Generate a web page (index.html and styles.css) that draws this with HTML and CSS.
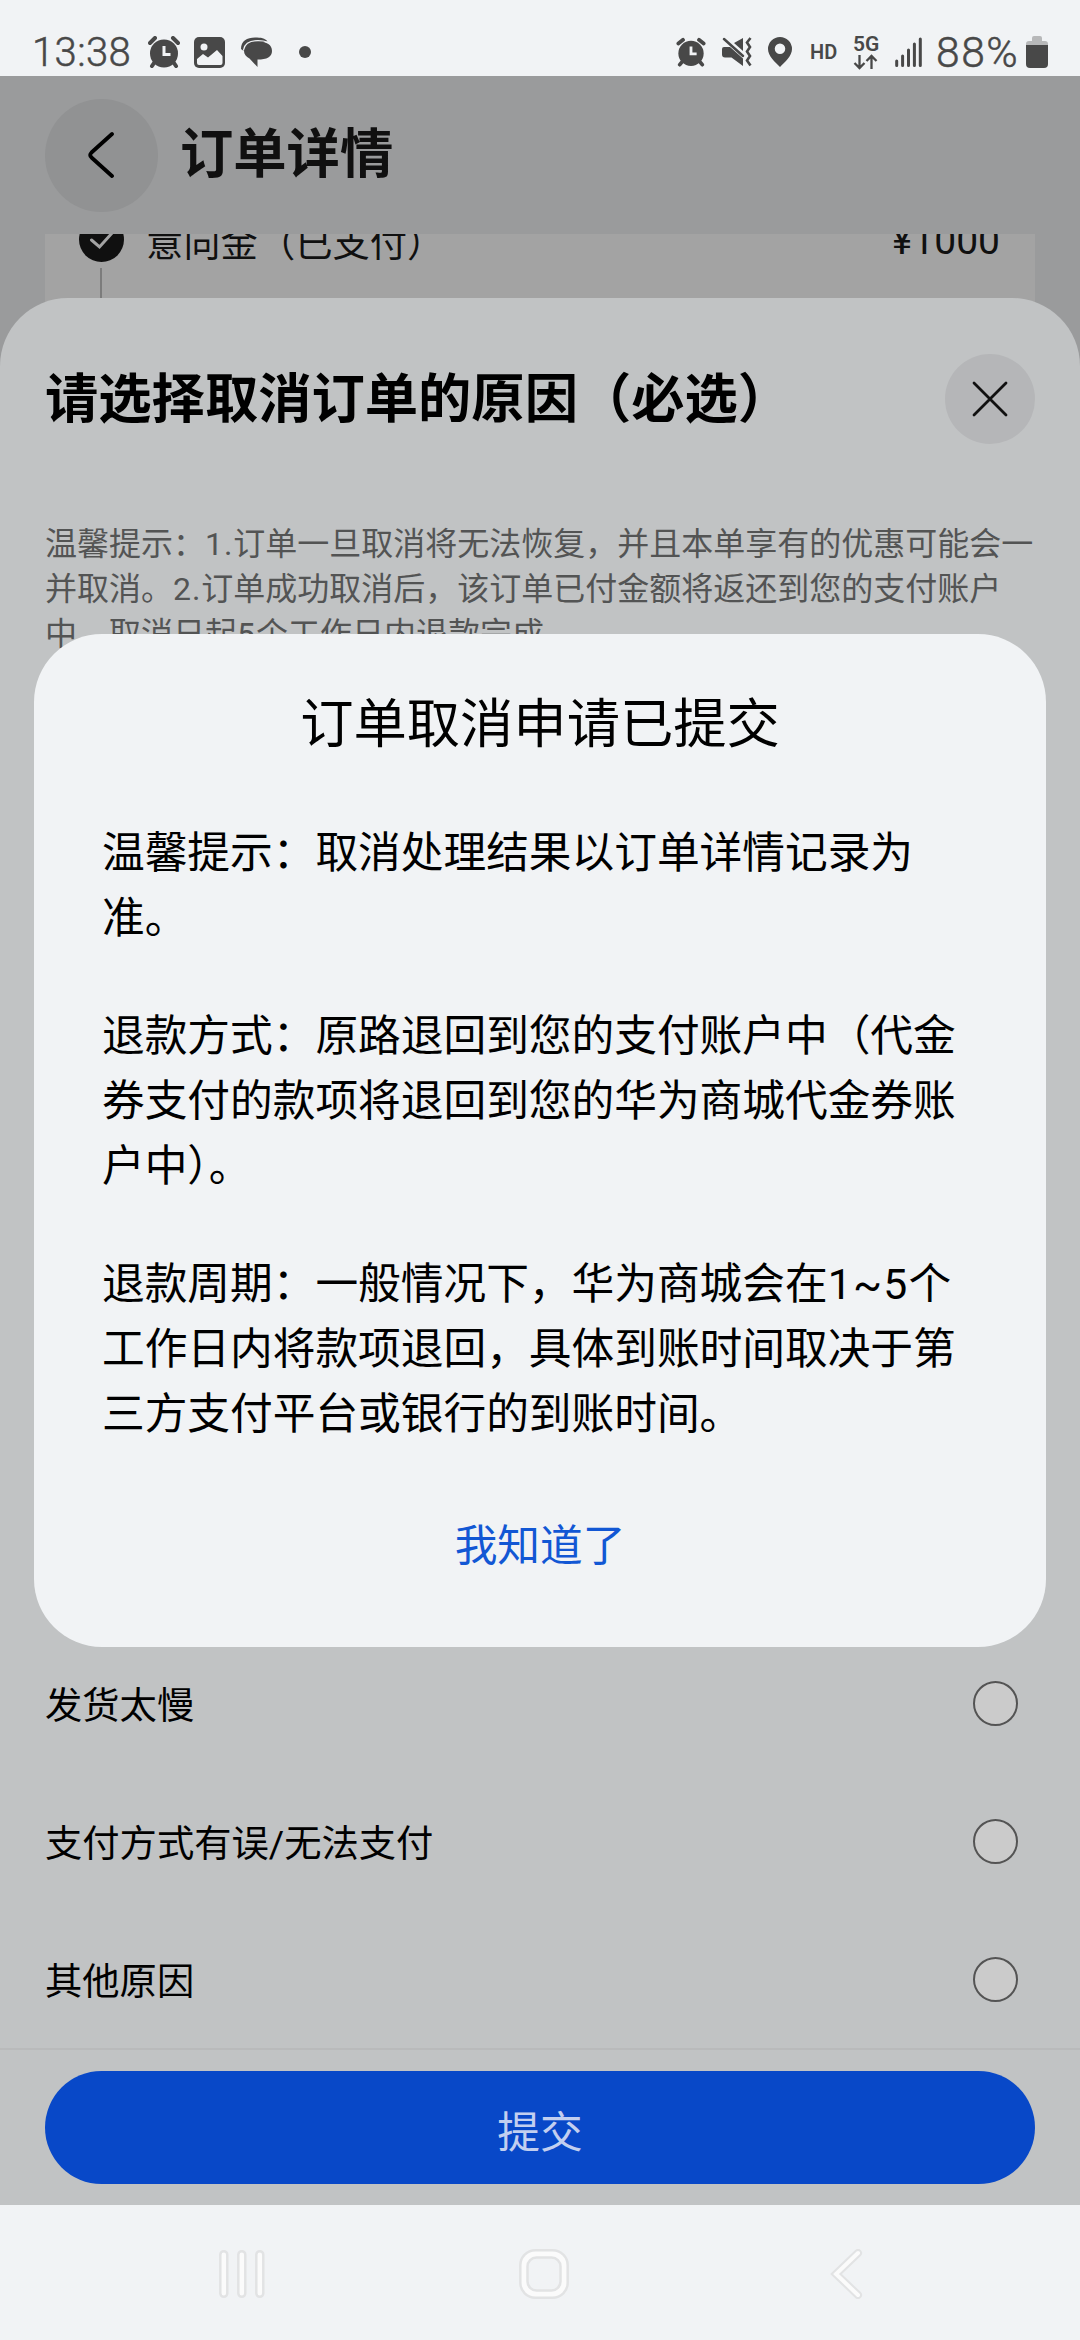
FILE: index.html
```html
<!DOCTYPE html>
<html lang="zh-CN">
  <head>
    <meta charset="utf-8">
    <title>订单详情</title>
    <link rel="stylesheet" href="styles.css">
  </head>
  <body>
    <div class="statusbar">
      <div class="status-left">
        <span class="clock">13:38</span>
        <svg class="s-alarm" width="32" height="32" viewBox="0 0 32 32">
          <circle cx="16" cy="17.5" r="14" fill="#484848"/>
          <path d="M2 7l5-5M30 7l-5-5M6 27l-2 3M26 27l2 3" stroke="#484848" stroke-width="4" stroke-linecap="round"/>
          <path d="M16 10v8.500h6.500" stroke="#f1f3f5" stroke-width="3" fill="none"/>
        </svg>
        <svg class="s-photo" width="31" height="31" viewBox="0 0 31 31">
          <rect width="31" height="31" rx="5" fill="#484848"/>
          <circle cx="10" cy="10" r="3.500" fill="#f1f3f5"/>
          <path d="M3 22l6-5 5 3.500 9-7.500 5.500 6v7q0 2-2 2h-21.500q-2 0-2-2z" fill="#f1f3f5"/>
        </svg>
        <svg class="s-chat" width="32" height="32" viewBox="0 0 32 32">
          <path d="M0 13C0 5 6 1.500 14 1.500c6 0 10 .5 12.500 4L14 9 2 14.500z" fill="#484848"/>
          <path d="M3 15C3 9 8 5.500 17 5.500S31 9 31 15s-5 8.500-14.500 8.500V31l-8-8.500C5 20.500 3 18 3 15z" fill="#484848"/>
          <path d="M2.500 14C3.500 8 9 4.600 17 4.600c4 0 7 .5 9.500 1.500" fill="none" stroke="#f1f3f5" stroke-width="1.200"/>
        </svg>
        <i class="dot"></i>
      </div>
      <div class="status-right">
        <svg width="30" height="30" viewBox="0 0 32 32">
          <circle cx="16" cy="17.500" r="13.500" fill="#484848"/>
          <path d="M2.500 7l5-4M29.500 7l-5-4M6 27l-2 2.500M26 27l2 2.500" stroke="#484848" stroke-width="4" stroke-linecap="round"/>
          <path d="M16 10v8h6" stroke="#f1f3f5" stroke-width="3" fill="none"/>
        </svg>
        <svg class="s-mute" width="30" height="30" viewBox="0 0 30 30">
          <path d="M0 12q0-2 2-2h6L21 21.500V29L9.500 20.500H3q-3 0-3-3zM12 6l9-5v13z" fill="#484848"/>
          <path d="M2 2l19 17" stroke="#484848" stroke-width="2.500" stroke-linecap="round"/>
          <path d="M28.500 1l-3.500 4.500 3 4.500-3 4.500 3 4.500-3 4.500 3.500 5" stroke="#484848" stroke-width="2.600" fill="none"/>
        </svg>
        <svg class="s-pin" width="24" height="30" viewBox="0 0 24 30">
          <path fill-rule="evenodd" d="M12 0a12 12 0 0 1 12 12c0 7-7 13-12 18C7 25 0 19 0 12A12 12 0 0 1 12 0zm0 6.500a5 5 0 1 0 0 10.500 5 5 0 0 0 0-10.500z" fill="#484848"/>
        </svg>
        <span class="hd">HD</span>
        <div class="net">
          <span>5G</span>
          <svg width="26" height="16" viewBox="0 0 26 16">
            <path d="M6.500 1v13M1.500 9l5 5 5-5M18.500 15V2M13.500 7l5-5 5 5" stroke="#484848" stroke-width="2.300" fill="none"/>
          </svg>
        </div>
        <svg class="s-signal" width="27" height="30" viewBox="0 0 27 30">
          <path d="M1.700 24v4.500M7.600 19v9.500M13.500 13v15.500M19.400 7v21.500M25.300 2v26.500" stroke="#484848" stroke-width="3" stroke-linecap="round"/>
        </svg>
        <span class="percent">88%</span>
        <svg class="s-battery" width="22" height="32" viewBox="0 0 22 32">
          <path d="M0 9V8q0-3 3-3h3V2q0-2 2-2h6q2 0 2 2v3h3q3 0 3 3v1z" fill="#b7b8b9"/>
          <path d="M0 9h22v19q0 4-4 4H4q-4 0-4-4z" fill="#484848"/>
        </svg>
      </div>
    </div>

    <div class="app">
      <div class="header">
        <div class="back">
          <svg width="28" height="48" viewBox="0 0 28 48"><path d="M25 3L4.500 21.500q-2.500 2.500 0 5L25 45" fill="none" stroke="#000" stroke-width="3.800" stroke-linecap="round"/></svg>
        </div>
        <h1>订单详情</h1>
      </div>
      <div class="card">
        <div class="pay-row">
          <svg class="check" width="45" height="45" viewBox="0 0 45 45">
            <circle cx="22.500" cy="22.500" r="22.500" fill="#101010"/>
            <path d="M12.500 23l8 7 13-14.500" fill="none" stroke="#a3a3a3" stroke-width="3" stroke-linecap="round"/>
          </svg>
          <span class="pay-name">意向金（已支付）</span>
          <span class="price">¥1000</span>
        </div>
        <div class="line"></div>
      </div>

      <!-- 取消原因 -->
      <div class="sheet">
        <div class="sheet-head">
          <h2>请选择取消订单的原因（必选）</h2>
          <div class="close">
            <svg width="36" height="36" viewBox="0 0 36 36"><path d="M2 2l32 32M34 2L2 34" stroke="#111" stroke-width="2.800" stroke-linecap="round"/></svg>
          </div>
        </div>
        <p class="tips">温馨提示：<span class="num">1.</span>订单一旦取消将无法恢复，并且本单享有的优惠可能会一<br>并取消。<span class="num">2.</span>订单成功取消后，该订单已付金额将返还到您的支付账户<br>中，取消日起<span class="num">5</span>个工作日内退款完成。</p>
        <ul class="reasons">
          <li>发货太慢<i class="radio"></i></li>
          <li>支付方式有误/无法支付<i class="radio"></i></li>
          <li>其他原因<i class="radio"></i></li>
        </ul>
        <div class="footer">
          <button class="submit">提交</button>
        </div>
      </div>

      <!-- 弹窗 -->
      <div class="dialog">
        <h3>订单取消申请已提交</h3>
        <p>温馨提示：取消处理结果以订单详情记录为<br>准。</p>
        <p>退款方式：原路退回到您的支付账户中（代金<br>券支付的款项将退回到您的华为商城代金券账<br>户中）。</p>
        <p>退款周期：一般情况下，华为商城会在<span class="num">1~5</span>个<br>工作日内将款项退回，具体到账时间取决于第<br>三方支付平台或银行的到账时间。</p>
        <a class="ok">我知道了</a>
      </div>
    </div>

    <div class="navbar">
      <svg width="48" height="50" viewBox="0 0 48 50">
        <g fill="#fbfbfb" stroke="#e2e3e4" stroke-width="2.500">
          <rect x="2.300" y="2.200" width="7" height="45.600" rx="3.500"/>
          <rect x="20.300" y="2.200" width="7" height="45.600" rx="3.500"/>
          <rect x="38.300" y="2.200" width="7" height="45.600" rx="3.500"/>
        </g>
      </svg>
      <svg class="home" width="50" height="50" viewBox="0 0 50 50">
        <rect x="1.300" y="1.300" width="47.400" height="47.400" rx="15" fill="#fbfbfb" stroke="#e2e3e4" stroke-width="2.500"/>
        <rect x="8.500" y="8.500" width="33" height="33" rx="9" fill="#f1f3f5" stroke="#e2e3e4" stroke-width="2.500"/>
      </svg>
      <svg width="34" height="50" viewBox="0 0 34 50">
        <path d="M28 4L6 25l22 21" fill="none" stroke="#e2e3e4" stroke-width="8" stroke-linecap="round"/>
        <path d="M28 4L6 25l22 21" fill="none" stroke="#fbfbfb" stroke-width="4" stroke-linecap="round"/>
      </svg>
    </div>
  </body>
</html>
```

FILE: styles.css
```css
* {
    box-sizing: border-box;
    margin: 0;
    padding: 0;
}

body {
    width: 1080px;
    height: 2340px;
    display: flex;
    flex-direction: column;
    overflow: hidden;
    background: #f1f3f5;
    color: #000;
    font-family: Roboto, "Noto Sans CJK SC", sans-serif;
}

svg {
    display: block;
    flex: none;
}

.num {
    letter-spacing: 0.03em;
}

/* 状态栏 */
.statusbar {
    height: 76px;
    padding: 28px 32px 0 32px;
    display: flex;
    justify-content: space-between;
    color: #484848;
}

.status-left,
.status-right {
    display: flex;
    align-items: center;
    height: 48px;
}

.clock {
    width: 116px;
    font-size: 40px;
    font-weight: 300;
    letter-spacing: 0.4px;
    -webkit-text-stroke: 0.5px #484848;
}

.s-photo {
    margin-left: 14px;
}

.s-chat {
    margin-left: 16px;
}

.dot {
    width: 12px;
    height: 12px;
    margin-left: 26px;
    border-radius: 50%;
    background: #484848;
}

.s-mute {
    margin-left: 16px;
}

.s-pin {
    margin-left: 16px;
}

.hd {
    margin-left: 18px;
    width: 27px;
    font-size: 20px;
    font-weight: 600;
}

.net {
    margin-left: 16px;
    width: 26px;
    font-size: 21px;
    line-height: 19px;
    font-weight: 600;
}

.s-signal {
    margin-left: 16px;
}

.percent {
    margin-left: 14px;
    width: 90px;
    font-size: 42.5px;
    font-weight: 300;
    letter-spacing: 1.6px;
    -webkit-text-stroke: 0.5px #484848;
}

/* 页面 */
.app {
    position: relative;
    height: 2129px;
    background: #9a9b9c;
    overflow: hidden;
}

.header {
    height: 158px;
    padding: 0 45px;
    display: flex;
    align-items: center;
    gap: 22px;
}

.back {
    width: 113px;
    height: 113px;
    padding-right: 2px;
    border-radius: 50%;
    background: #919293;
    display: flex;
    align-items: center;
    justify-content: center;
}

h1 {
    padding-bottom: 11px;
    font-size: 53.3px;
    font-weight: 700;
    color: #101010;
}

.card {
    height: 120px;
    margin: 0 45px;
    padding: 0 35px 0 34px;
    background: #a3a3a3;
    overflow: hidden;
}

.pay-row {
    height: 45px;
    margin-top: -17px;
    display: flex;
    align-items: center;
    color: #101010;
    font-size: 37.3px;
}

.pay-name {
    margin-left: 22px;
    padding-top: 2px;
}

.price {
    margin-left: auto;
    padding-top: 3px;
    font-size: 39px;
}

.line {
    width: 2px;
    height: 60px;
    margin: 6px 0 0 21px;
    background: #7c7c7c;
}

/* 底部弹层 */
.sheet {
    position: absolute;
    left: 0;
    right: 0;
    top: 222px;
    bottom: 0;
    display: flex;
    flex-direction: column;
    border-radius: 68px 68px 0 0;
    background: #c1c3c4;
}

.sheet-head {
    height: 146px;
    padding: 56px 45px 0;
    display: flex;
    justify-content: space-between;
}

h2 {
    font-size: 53.3px;
    line-height: 92px;
    font-weight: 700;
}

.close {
    width: 90px;
    height: 90px;
    border-radius: 50%;
    background: #b5b6b8;
    display: flex;
    align-items: center;
    justify-content: center;
}

.tips {
    margin: 78px 0 0 45px;
    white-space: nowrap;
    font-size: 32px;
    line-height: 45px;
    color: #535454;
}

.reasons {
    margin-top: auto;
    list-style: none;
}

.reasons li {
    height: 138px;
    padding: 0 62px 0 45px;
    display: flex;
    justify-content: space-between;
    font-size: 37.3px;
    line-height: 145px;
}

.radio {
    width: 45px;
    height: 45px;
    margin-top: 47px;
    border: 2px solid #545454;
    border-radius: 50%;
    background: #cbcbcb;
}

.footer {
    height: 157px;
    padding: 21px 45px;
    border-top: 2px solid #b9babb;
}

.submit {
    width: 990px;
    height: 113px;
    padding-top: 2px;
    border: none;
    border-radius: 57px;
    background: #0848c8;
    color: #c2cff0;
    font: inherit;
    font-size: 42.7px;
}

.dialog {
    position: absolute;
    left: 34px;
    top: 558px;
    width: 1012px;
    height: 1013px;
    padding: 46px 68px 0;
    border-radius: 68px;
    background: #f1f3f5;
}

.dialog h3 {
    margin-bottom: 51px;
    font-size: 53.3px;
    line-height: 90px;
    font-weight: 400;
    text-align: center;
}

.dialog p {
    margin-bottom: 53px;
    white-space: nowrap;
    font-size: 42.7px;
    line-height: 65px;
}

.ok {
    display: block;
    padding-top: 14px;
    font-size: 42.7px;
    line-height: 64px;
    text-align: center;
    color: #1257d4;
}

/* 导航键 */
.navbar {
    height: 135px;
    padding: 2px 216px 0 218px;
    display: flex;
    align-items: center;
    justify-content: space-between;
}

.home {
    margin-right: 8px;
}
```
